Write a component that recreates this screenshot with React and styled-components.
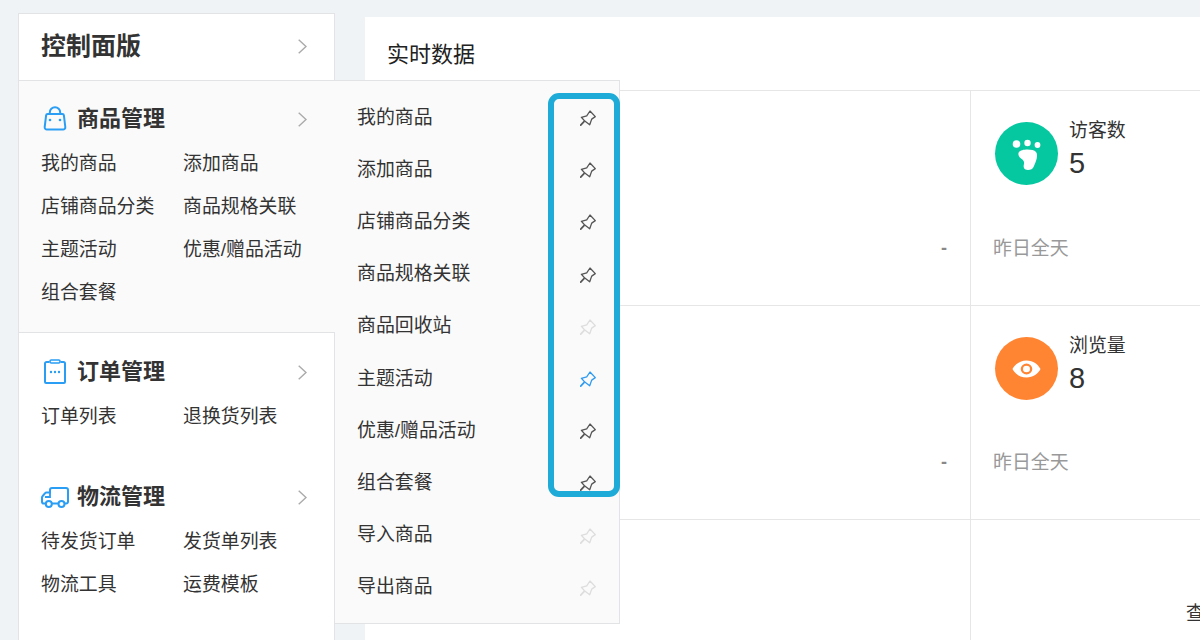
import React from "react";
import styled, { createGlobalStyle } from "styled-components";

const GlobalStyle = createGlobalStyle`
  html, body {
    margin: 0;
    padding: 0;
    height: 640px;
    overflow: hidden;
    background: #f0f3f6;
    font-family: "Liberation Sans", "Noto Sans CJK SC", sans-serif;
  }
`;

const Page = styled.div`
  display: flex;
  align-items: flex-start;
  gap: 30px;
  width: 1200px;
  height: 640px;
  padding: 13px 0 0 18px;
  box-sizing: border-box;
  overflow: hidden;
`;

const Sidebar = styled.aside`
  position: relative;
  flex: 0 0 317px;
  height: 660px;
  box-sizing: border-box;
  background: #fff;
  border: 1px solid #e2e3e5;
`;

const SideHead = styled.div`
  display: flex;
  align-items: center;
  justify-content: space-between;
  height: 66px;
  padding: 0 27px 0 22px;
  border-bottom: 1px solid #e2e3e5;
  font-size: 25px;
  font-weight: 700;
  color: #333;
`;

const HeadText = styled.span`
  padding-bottom: 6px;
`;

const Section = styled.section`
  padding: ${(p) => (p.$active ? "22px 28px 18px 22px" : "23px 27px 20px 22px")};
  margin-right: ${(p) => (p.$active ? "-1px" : "0")};
  background: ${(p) => (p.$active ? "#fafafa" : "#fff")};
  border-bottom: ${(p) => (p.$active ? "1px solid #e2e3e5" : "0")};
`;

const SectionTitle = styled.div`
  display: flex;
  align-items: center;
  height: 30px;
  margin-bottom: 9px;
  font-size: 22px;
  font-weight: 700;
  color: #333;
`;

const TitleText = styled.span`
  padding-bottom: 4px;
`;

const IconSlot = styled.span`
  display: flex;
  justify-content: center;
  width: 28px;
  margin-right: 8px;
`;

const Chevron = styled.svg`
  margin-left: auto;
  margin-top: ${(p) => p.$shift}px;
`;

const LinkGrid = styled.div`
  display: grid;
  grid-template-columns: 142px 1fr;
  grid-auto-rows: 43px;
  align-items: center;
  font-size: 18.9px;
  color: #333;
`;

const LinkText = styled.span`
  padding-bottom: 4px;
`;

const Popover = styled.div`
  position: absolute;
  left: 316px;
  top: 66px;
  width: 285px;
  height: 544px;
  box-sizing: border-box;
  padding-top: 11px;
  background: #fafafa;
  border: 1px solid #e2e3e5;
  border-left: 0;
`;

const PopRow = styled.div`
  display: flex;
  align-items: center;
  justify-content: space-between;
  height: 52.2px;
  padding: 0 23px 0 22px;
  font-size: 18.9px;
  color: #333;
`;

const PopText = styled.span`
  padding-bottom: 6px;
`;

const PinIcon = styled.svg`
  display: block;
  color: ${(p) => p.$tone};
`;

const Highlight = styled.div`
  position: absolute;
  left: 213px;
  top: 12px;
  width: 72px;
  height: 404px;
  box-sizing: border-box;
  border: 6px solid #1fabd7;
  border-radius: 11px;
`;

const Main = styled.main`
  flex: 1 0 auto;
  margin-top: 4px;
  background: #fff;
`;

const MainTitle = styled.div`
  display: flex;
  align-items: center;
  height: 73px;
  box-sizing: border-box;
  padding: 0 0 4px 22px;
  font-size: 22px;
  color: #222;
`;

const DataRow = styled.div`
  display: grid;
  grid-template-columns: 605px 1fr;
  height: ${(p) => p.$height}px;
  border-top: 1px solid #e6e6e6;
`;

const LeftCell = styled.div`
  display: flex;
  align-items: flex-end;
  justify-content: flex-end;
  padding: 0 23px 46px 0;
  font-size: 18px;
  font-weight: 700;
  color: #888;
`;

const StatCell = styled.div`
  display: flex;
  flex-direction: column;
  justify-content: space-between;
  padding: 31px 0 43px 24px;
  border-left: 1px solid #e6e6e6;
`;

const StatTop = styled.div`
  display: flex;
  gap: 11px;
`;

const Circle = styled.div`
  display: flex;
  align-items: center;
  justify-content: center;
  width: 63px;
  height: 63px;
  border-radius: 50%;
  background: ${(p) => p.$color};
`;

const StatText = styled.div`
  display: flex;
  flex-direction: column;
`;

const StatLabel = styled.div`
  height: 20px;
  line-height: 18px;
  font-size: 18.9px;
  color: #333;
`;

const StatValue = styled.div`
  margin-top: 4px;
  line-height: 34px;
  font-size: 29px;
  color: #333;
`;

const Yesterday = styled.div`
  margin-left: -2px;
  font-size: 18.9px;
  line-height: 26px;
  color: #999;
`;

const BottomCell = styled.div`
  display: flex;
  align-items: flex-end;
  justify-content: flex-end;
  height: 120px;
  border-left: 1px solid #e6e6e6;
`;

const ViewLink = styled.div`
  margin-right: -20px;
  padding-bottom: 15px;
  white-space: nowrap;
  width: 34px;
  overflow: hidden;
  font-size: 18.9px;
  color: #333;
`;

const TruckSvg = styled.svg`
  margin-top: 3px;
`;

const Arrow = ({ shift = 2 }) => (
  <Chevron $shift={shift} width="9" height="15" viewBox="0 0 9 15" fill="none">
    <path d="M.7.7L8 7.500.7 14.300" stroke="#aaa" strokeWidth="1.4" />
  </Chevron>
);

const BagIcon = () => (
  <svg width="24" height="25" viewBox="0 0 24 25" fill="none" stroke="#2a9df4" strokeWidth="2">
    <path d="M4.600 8h14.800a1.500 1.500 0 0 1 1.500 1.300l1.400 11.700a2.300 2.300 0 0 1-2.300 2.600H4a2.300 2.300 0 0 1-2.300-2.600L3.100 9.300A1.500 1.500 0 0 1 4.600 8z" />
    <path d="M6.800 8V6.500a5.200 5.200 0 0 1 10.400 0V8" />
    <circle cx="7" cy="14" r="1.300" fill="#2a9df4" stroke="none" />
    <circle cx="17" cy="14" r="1.300" fill="#2a9df4" stroke="none" />
  </svg>
);

const ClipIcon = () => (
  <svg width="22" height="25" viewBox="0 0 22 25" fill="none" stroke="#2a9df4" strokeWidth="2">
    <path d="M5.500 3H2.600A1.600 1.600 0 0 0 1 4.600v18.300a1.100 1.100 0 0 0 1.100 1.100h17.800a1.100 1.100 0 0 0 1.100-1.100V4.600A1.600 1.600 0 0 0 19.400 3h-2.900" />
    <rect x="6" y="1" width="10" height="3" rx="1.200" strokeWidth="1.600" />
    <circle cx="7" cy="13" r="1.200" fill="#2a9df4" stroke="none" />
    <circle cx="11" cy="13" r="1.200" fill="#2a9df4" stroke="none" />
    <circle cx="15" cy="13" r="1.200" fill="#2a9df4" stroke="none" />
  </svg>
);

const TruckIcon = () => (
  <TruckSvg width="28" height="21" viewBox="0 0 28 21" fill="none" stroke="#2a9df4" strokeWidth="2">
    <path d="M4.500 16.500H2.800A1.800 1.800 0 0 1 1 14.700v-4.200c0-.5.200-1 .5-1.300l2.600-3C4.500 5.700 5 5.500 5.500 5.500H9V3a2 2 0 0 1 2-2h14a2 2 0 0 1 2 2v11.700a1.800 1.800 0 0 1-1.800 1.800H24" />
    <path d="M11 16.500h6M9 5.500V10H4" strokeWidth="1.800" />
    <circle cx="7.800" cy="17" r="3" />
    <circle cx="20.500" cy="17" r="3" />
  </TruckSvg>
);

const Pin = ({ tone }) => (
  <PinIcon $tone={tone} width="16" height="16" viewBox="0 0 16 16" fill="none" stroke="currentColor" strokeWidth="1.300" strokeLinejoin="round">
    <path d="M10 1l5.300 5.600-3.600 2.500-2 5.700-4.900-3.700-3.400-3.800 5.300-1.500z" />
    <path d="M4 11.700L.7 15.200" strokeLinecap="round" strokeWidth="1.700" />
  </PinIcon>
);

const sections = [
  { title: "商品管理", icon: <BagIcon />, active: true, links: ["我的商品", "添加商品", "店铺商品分类", "商品规格关联", "主题活动", "优惠/赠品活动", "组合套餐"] },
  { title: "订单管理", icon: <ClipIcon />, links: ["订单列表", "退换货列表"] },
  { title: "物流管理", icon: <TruckIcon />, links: ["待发货订单", "发货单列表", "物流工具", "运费模板"] },
];

const popItems = [
  ["我的商品", "#555"],
  ["添加商品", "#555"],
  ["店铺商品分类", "#555"],
  ["商品规格关联", "#555"],
  ["商品回收站", "#ddd"],
  ["主题活动", "#2f9bf0"],
  ["优惠/赠品活动", "#555"],
  ["组合套餐", "#555"],
  ["导入商品", "#ddd"],
  ["导出商品", "#ddd"],
];

export default function App() {
  return (
    <Page>
      <GlobalStyle />
      <Sidebar>
        <SideHead>
          <HeadText>控制面版</HeadText>
          <Arrow shift={-2} />
        </SideHead>
        {sections.map((s) => (
          <Section key={s.title} $active={s.active}>
            <SectionTitle>
              <IconSlot>{s.icon}</IconSlot>
              <TitleText>{s.title}</TitleText>
              <Arrow />
            </SectionTitle>
            <LinkGrid>
              {s.links.map((l) => (
                <LinkText key={l}>{l}</LinkText>
              ))}
            </LinkGrid>
          </Section>
        ))}
        <Popover>
          {popItems.map(([label, tone]) => (
            <PopRow key={label}>
              <PopText>{label}</PopText>
              <Pin tone={tone} />
            </PopRow>
          ))}
          <Highlight />
        </Popover>
      </Sidebar>
      <Main>
        <MainTitle>实时数据</MainTitle>
        <DataRow $height={214}>
          <LeftCell>-</LeftCell>
          <StatCell>
            <StatTop>
              <Circle $color="#05c7a0">
                <svg width="30" height="32" viewBox="0 0 30 32" fill="#fff">
                  <circle cx="4.500" cy="6" r="3.800" />
                  <circle cx="15.500" cy="5" r="3.200" />
                  <circle cx="25.500" cy="7" r="2.900" />
                  <path d="M7 14c2-3 14-3.500 17 0 2.500 3 0 10-2 14-1 3-3.500 4-6 4-4 0-5-3-4-6 .5-3-1-4-3-5.500C7 19 5.500 16 7 14z" />
                </svg>
              </Circle>
              <StatText>
                <StatLabel>访客数</StatLabel>
                <StatValue>5</StatValue>
              </StatText>
            </StatTop>
            <Yesterday>昨日全天</Yesterday>
          </StatCell>
        </DataRow>
        <DataRow $height={213}>
          <LeftCell>-</LeftCell>
          <StatCell>
            <StatTop>
              <Circle $color="#ff8533">
                <svg width="29" height="18" viewBox="0 0 30 20" fill="#fff" preserveAspectRatio="none">
                  <path fillRule="evenodd" d="M15 .5C22 .5 27 5 29.500 10 27 15 22 19.500 15 19.500S3 15 .5 10C3 5 8 .5 15 .5zm0 3.500a6 6 0 1 0 0 12 6 6 0 0 0 0-12z" />
                  <circle cx="15" cy="10" r="3.600" />
                </svg>
              </Circle>
              <StatText>
                <StatLabel>浏览量</StatLabel>
                <StatValue>8</StatValue>
              </StatText>
            </StatTop>
            <Yesterday>昨日全天</Yesterday>
          </StatCell>
        </DataRow>
        <DataRow $height={120}>
          <div />
          <BottomCell>
            <ViewLink>查看</ViewLink>
          </BottomCell>
        </DataRow>
      </Main>
    </Page>
  );
}
